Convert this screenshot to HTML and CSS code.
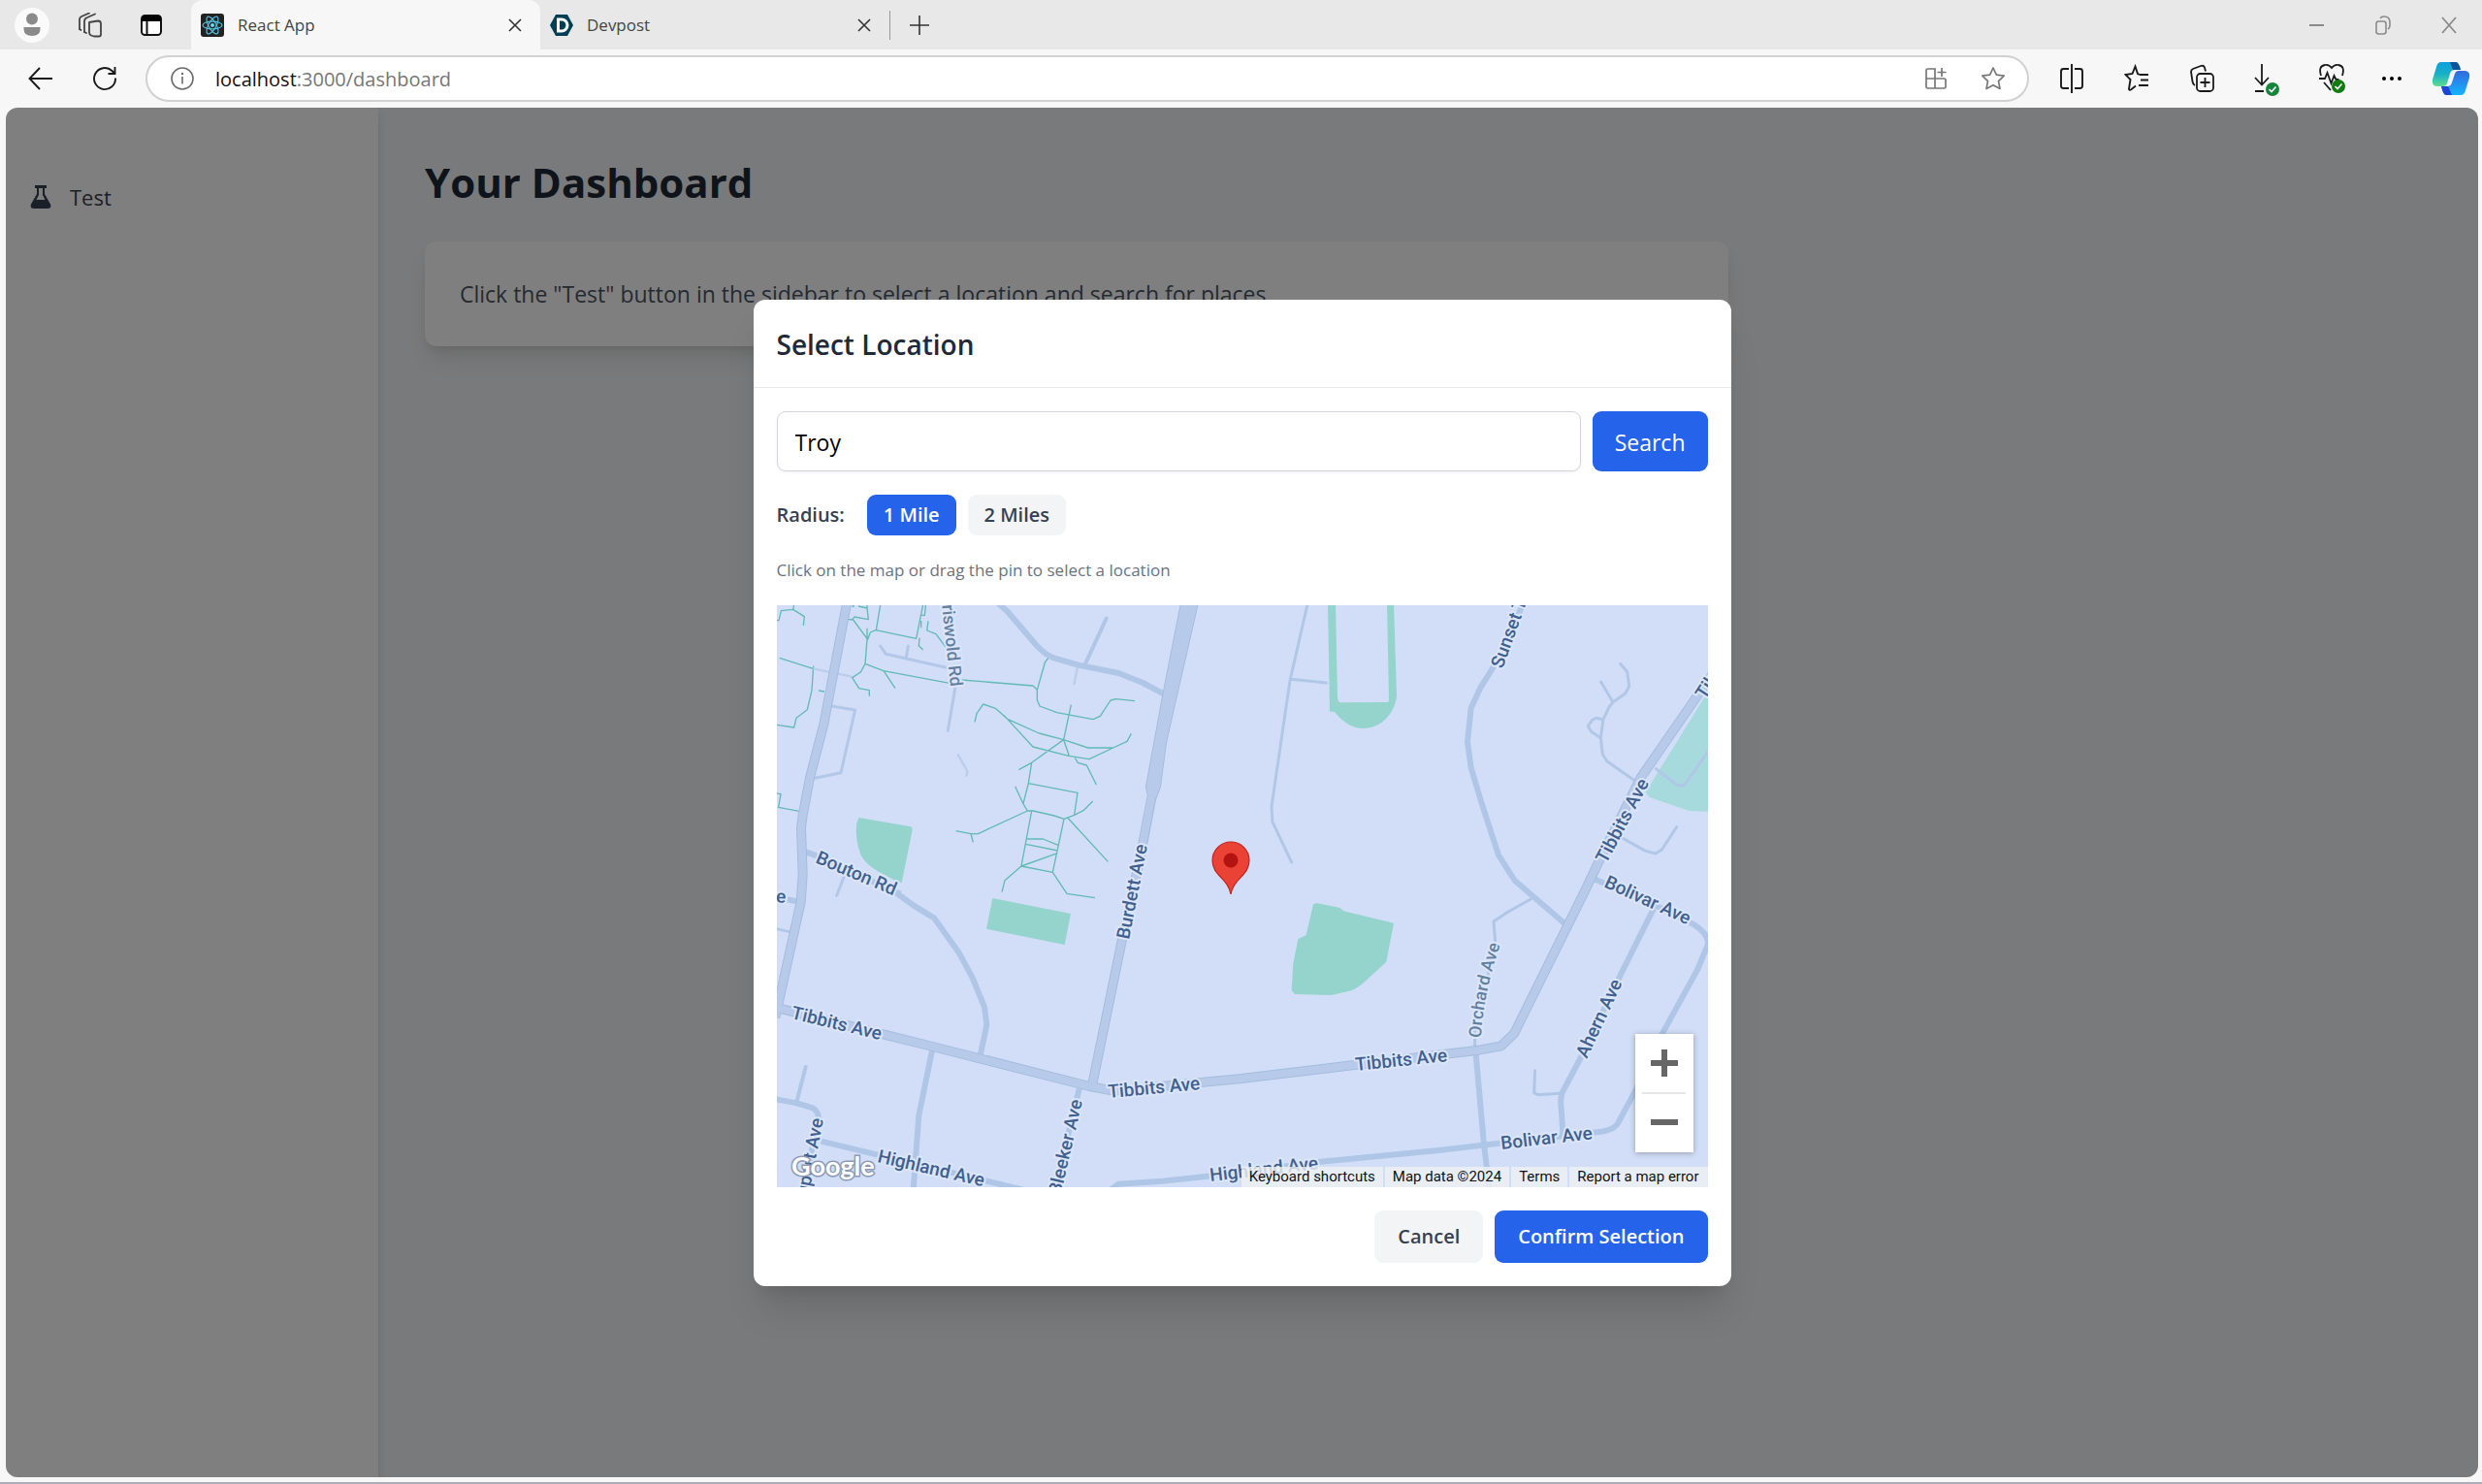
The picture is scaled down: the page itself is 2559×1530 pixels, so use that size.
FILE: index.html
```html
<!DOCTYPE html>
<html lang="en">
<head>
<meta charset="utf-8">
<title>React App</title>
<link rel="stylesheet" href="styles.css">
</head>
<body>
<div class="browser">
  <header class="tabstrip">
    <div class="strip-tools">
      <button class="avatar" aria-label="Profile"><svg width="36" height="36" viewBox="0 0 36 36"><circle cx="18" cy="18" r="18" fill="#fafafa"/><circle cx="18" cy="11.500" r="6" fill="#8a8a8a"/><path d="M9.500 20h17v2q0 7-8.500 7T9.500 22z" fill="#8a8a8a"/></svg></button>
      <button class="strip-btn" aria-label="Workspaces"><svg class="ico" width="26" height="26" viewBox="0 0 26 26"><g fill="none" stroke="#444" stroke-width="1.800" stroke-linejoin="round" stroke-linecap="round"><path d="M12 9.500l9-1.500q3 0 3 3v11q0 2-2 2h-5l-3-1q-2-1-2-3z" transform="translate(0 .5)"/><path d="M7 20V9q0-3 3-4l8-3.500"/><path d="M2 17V7q0-2 2-3l8-3.500"/><path d="M7 20l2 1M2 17l1.500 1"/></g></svg></button>
      <button class="strip-btn" aria-label="Tab actions"><svg width="24" height="24" viewBox="0 0 24 24"><rect x="2" y="2" width="20" height="20" rx="3.500" fill="#fff" stroke="#111" stroke-width="2"/><path d="M2 8V5q0-3 3-3h14q3 0 3 3v3z" fill="#000"/><path d="M7.500 8v14" stroke="#111" stroke-width="2"/></svg></button>
    </div>
    <div class="tab tab-active">
      <svg width="24" height="24" viewBox="0 0 24 24"><rect width="24" height="24" rx="3" fill="#222"/><g fill="none" stroke="#53c1de" stroke-width="1.200"><ellipse cx="12" cy="12" rx="10" ry="3.900"/><ellipse cx="12" cy="12" rx="10" ry="3.900" transform="rotate(60 12 12)"/><ellipse cx="12" cy="12" rx="10" ry="3.900" transform="rotate(120 12 12)"/></g><circle cx="12" cy="12" r="2" fill="#61dafb"/></svg>
      <span class="tab-title">React App</span>
      <button class="tab-close" aria-label="Close tab"><svg width="14" height="14" viewBox="0 0 14 14"><path d="M1 1l12 12M13 1L1 13" stroke="#333" stroke-width="1.600"/></svg></button>
    </div>
    <div class="tab">
      <svg width="24" height="24" viewBox="0 0 24 24"><path d="M6 1h12l6 11-6 11H6L0 12z" fill="#003e54"/><path d="M8.500 6H12a6 6 0 0 1 0 12H8.500z" fill="none" stroke="#fff" stroke-width="3"/></svg>
      <span class="tab-title">Devpost</span>
      <button class="tab-close" aria-label="Close tab"><svg width="14" height="14" viewBox="0 0 14 14"><path d="M1 1l12 12M13 1L1 13" stroke="#333" stroke-width="1.600"/></svg></button>
    </div>
    <span class="tab-divider"></span>
    <button class="new-tab" aria-label="New tab"><svg width="22" height="22" viewBox="0 0 22 22"><path d="M11 1v20M1 11h20" stroke="#333" stroke-width="1.600"/></svg></button>
    <div class="window-controls">
      <button aria-label="Minimize"><svg width="16" height="16" viewBox="0 0 16 16"><path d="M0 8h15" stroke="#8a8a8a" stroke-width="2"/></svg></button>
      <button aria-label="Restore"><svg width="16" height="20" viewBox="0 0 16 20"><g fill="none" stroke="#8a8a8a" stroke-width="1.600"><rect x="1" y="6" width="10" height="13" rx="2.500"/><path d="M5 3q1-2 4-2 6 0 6 6v3q0 3-2 4"/></g></svg></button>
      <button aria-label="Close"><svg width="16" height="18" viewBox="0 0 16 18"><path d="M1 1l14 16M15 1L1 17" stroke="#8a8a8a" stroke-width="1.800"/></svg></button>
    </div>
  </header>

  <div class="toolbar">
    <button class="nav-btn" aria-label="Back"><svg width="26" height="24" viewBox="0 0 26 24"><path d="M12 1L1.500 12 12 23M1.500 12H25" fill="none" stroke="#1a1a1a" stroke-width="1.900"/></svg></button>
    <button class="nav-btn" aria-label="Refresh"><svg width="26" height="26" viewBox="0 0 26 26"><path d="M24 12.500A11 11 0 1 1 20.500 5L23 7.500M23.500 1v7h-7" fill="none" stroke="#1a1a1a" stroke-width="1.900"/></svg></button>
    <div class="address">
      <svg width="24" height="24" viewBox="0 0 24 24"><circle cx="12" cy="12" r="11" fill="none" stroke="#6b6b6b" stroke-width="1.600"/><path d="M12 10v7.500" stroke="#6b6b6b" stroke-width="1.600"/><circle cx="12" cy="7" r="1.200" fill="#6b6b6b"/></svg>
      <a class="url" href="#"><b>localhost</b>:3000/dashboard</a>
      <button aria-label="App available"><svg width="24" height="24" viewBox="0 0 24 24"><g fill="none" stroke="#777" stroke-width="1.700"><path d="M2 3.500Q2 2 3.500 2H11v20H3.500Q2 22 2 20.500zM2 12h18.500q1.500 0 1.500 1.500v7q0 1.500-1.500 1.500H11M18 1v9M13.500 5.500h9"/></g></svg></button>
      <button aria-label="Add to favorites"><svg width="26" height="26" viewBox="0 0 26 26"><path d="M13 2l3.400 7.200 7.800 1-5.700 5.400 1.500 7.900L13 19.700 6 23.500l1.500-7.900L1.800 10.200l7.800-1z" fill="none" stroke="#777" stroke-width="1.700" stroke-linejoin="round"/></svg></button>
    </div>
    <div class="tool-icons">
      <button aria-label="Split screen"><svg width="26" height="30" viewBox="0 0 26 30"><g fill="none" stroke="#1a1a1a" stroke-width="1.900"><path d="M10 5H4.500Q2 5 2 7.500v15Q2 25 4.500 25H10M16 5h5.500Q24 5 24 7.500v15q0 2.500-2.500 2.500H16M13 0v30"/></g></svg></button>
      <button aria-label="Favorites"><svg width="26" height="30" viewBox="0 0 26 30"><path d="M16 11l-2-1-2.500-7.500L8.500 10l-7 1 5 5-1.500 9.500q0 2 2 1l5-4M16 11h9M17 16.500h8M15 22h10" fill="none" stroke="#1a1a1a" stroke-width="1.900"/></svg></button>
      <button aria-label="Collections"><svg width="26" height="30" viewBox="0 0 26 30"><g fill="none" stroke="#1a1a1a" stroke-width="1.800"><path d="M6 22q-2-1-2.500-4L2 8q0-2 2-3l8-3q3-1 4 1.500l1 4"/><rect x="8" y="10" width="17" height="18" rx="3.500"/><path d="M16.500 14v10M11.500 19h10"/></g></svg></button>
      <button aria-label="Downloads"><svg width="26" height="36" viewBox="0 0 26 36"><path d="M8 3v21M1 17l7 7.500 7-7.500M1 31h9" fill="none" stroke="#1a1a1a" stroke-width="1.800"/><circle cx="19" cy="29" r="7" fill="#16833b"/><path d="M15.500 29l2.500 2.500 4.500-5" fill="none" stroke="#fff" stroke-width="1.600"/></svg></button>
      <button aria-label="Browser essentials"><svg width="28" height="32" viewBox="0 0 28 32"><path d="M3 13Q0 3 7 2q4-1 7 3 3-4 7-3 7 1 4 11M1 16h6l2.500-6 4 11 3-8 2 4h3M6 20l7 8" fill="none" stroke="#1a1a1a" stroke-width="1.800"/><circle cx="21" cy="24" r="7" fill="#107c10"/><path d="M17.500 24l2.500 2.500 4.500-5" fill="none" stroke="#fff" stroke-width="1.600"/></svg></button>
      <button class="more" aria-label="Settings and more"><svg width="22" height="6" viewBox="0 0 22 6"><circle cx="3" cy="3" r="2" /><circle cx="11" cy="3" r="2"/><circle cx="19" cy="3" r="2"/></svg></button>
      <button class="copilot" aria-label="Copilot"><svg width="38" height="34" viewBox="0 0 38 34"><defs><linearGradient id="cpA" x1="0" y1="0" x2="0" y2="1"><stop offset="0" stop-color="#0e9fdd"/><stop offset=".5" stop-color="#17b0c8"/><stop offset="1" stop-color="#5fdc8e"/></linearGradient><linearGradient id="cpB" x1="0" y1="0" x2="0" y2="1"><stop offset="0" stop-color="#3468de"/><stop offset="1" stop-color="#14b4fb"/></linearGradient></defs><path d="M9 0h15q3 0 5 8h-6q-4 0-5 4l-3 10q-1 3-4 3H5q-6 0-5-7L4 5q1-5 5-5z" fill="url(#cpA)"/><path d="M18 0h6q3 0 5 8h-8z" fill="#0b559b"/><path d="M29 34H14q-3 0-5-9h6q4 0 5-4l3-9q1-3 4-3h6q6 0 5 7l-4 13q-1 5-5 5z" fill="url(#cpB)"/><path d="M20 34h-6q-3 0-5-9h7z" fill="#1e45d4"/></svg></button>
    </div>
  </div>

  <div class="viewport">
    <aside class="sidebar">
      <button class="side-item"><svg width="22" height="24" viewBox="0 0 22 24"><path d="M5 0h12v3h-2v6l6 10.500q1.500 4.500-3 4.500H4q-4.500 0-3-4.500L7 9V3H5zM9 3v7l-2.500 5h9L13 10V3z" fill="#374151" fill-rule="evenodd"/></svg>Test</button>
    </aside>
    <main class="main">
      <h1>Your Dashboard</h1>
      <section class="card"><p>Click the "Test" button in the sidebar to select a location and search for places.</p></section>
    </main>

    <div class="overlay">
      <div class="modal" role="dialog" aria-labelledby="modal-title">
        <h2 id="modal-title">Select Location</h2>
        <div class="modal-body">
          <form class="search">
            <input type="text" value="Troy" aria-label="Location">
            <button type="button" class="primary">Search</button>
          </form>
          <div class="radius">
            <span class="radius-label">Radius:</span>
            <button class="pill primary">1 Mile</button>
            <button class="pill muted">2 Miles</button>
          </div>
          <p class="hint">Click on the map or drag the pin to select a location</p>
          <div class="map">
            <svg class="map-canvas" viewBox="0 0 960 600" role="img" aria-label="Map">
              <rect width="960" height="600" fill="#d2def7"/>
              <g transform="scale(.333333)">
                <!-- parks and fields -->
                <g fill="#94d4cc">
                  <path transform="translate(1437 -27)" d="M267 20L273 356H287Q330 408 378 408Q430 405 460 362Q480 330 480 305L471 20H450L456 320Q456 327 450 327L303 328Q297 322 297 310L291 20Z"/>
                  <path transform="translate(-18 -27)" d="M272 684L432 712Q438 715 437 722L404 885L398 886L330 850Q290 825 278 800Q258 750 265 700Z"/>
                  <path transform="translate(-18 888)" d="M685 18L927 66 908 162 666 113Z"/>
                  <path transform="translate(1437 888)" d="M222 37Q228 32 236 34L305 48 316 58 471 95 448 215 375 282Q355 298 340 304L278 318 165 315 155 303 160 220 175 145 200 132Z"/>
                  <path transform="translate(1437 -27)" d="M1460 280L1430 315 1250 605 1260 620 1385 663 1460 666Z" fill="#a7dadc"/>
                </g>
                <!-- footpaths -->
                <g transform="translate(-18 -27)" fill="none" stroke="#62b9b6" stroke-width="4" stroke-linejoin="round">
                  <path d="M18 74h6l7-30 37-4 35 22-3 28M68 40l4-20M26 190l106 34M131 215l-5 75-14 60-34 26-7 29-54-8M147 291l18 3M10 608l20 3-7 41 64 12M235 70l19 2 45 61 8-22 17-7 125 26 22-110M325 104l15-90M297 98v35l-6 75-14 26-26 17 21 33 32 6v18M252 70l6-7 43 8-4-35-27-6M297 36V20M250 30l8 0M479 20l-4 38-9 0M464 75v22M486 76l-4 29 28 11 35 47M459 128l-2 24 13 13M291 208l57 22 204 38M348 230l36 54M590 258l220 18 13 13 24-85 12-16M823 289v31l8 19 53 20 112 21 22-10 32-49 17-4 58 6M928 335l-23 108 75 25h78l43-20 13-24M905 443l-76-20-98-44-37-33-38-13-20 29-6 26M720 367l90 98 111 28 63 10 74-35M905 443l17 50M905 443l-99 71-40 22M940 500l9 14 27 8 30 60M806 514l-10 64-16 63M796 578l152 29-10 68M755 587l25 54 13 22-153 71H618l-46-9M618 734l7 26M793 663h18l65 15 30 10 32-12 28-14 29-29M917 684l125 136M806 663l-32 171-51 44-9 36M906 688l-35 165-97-19 112-40M792 750h49l49 20M788 766l99 20M871 853l44 66 87 13"/>
                </g>
                <!-- local streets -->
                <g fill="none" stroke="#afc6e6" stroke-width="18" stroke-linejoin="round">
                  <g transform="translate(-18 -27)">
                    <path d="M690 10L730 45 820 150Q850 182 875 190L950 212 1075 237 1150 267 1220 304M108 790L135 800 400 920"/>
                    <path d="M972 208L1037 68" stroke-width="12" stroke-linecap="round"/>
                    <path d="M338 153L355 178 555 223M424 153L418 190M570 280L547 415M183 338L260 351 216 545 135 562M228 860L203 925" stroke-width="9" stroke-linecap="round" stroke="#b3c8e8"/>
                    <path d="M948 218L937 272M577 487L607 540 604 557M130 223L250 248" stroke-width="7" stroke="#bccdeb"/>
                  </g>
                  <g transform="translate(-18 888)">
                    <path d="M385 0L440 40 505 80 580 185 622 262 660 355 667 410 648 500M498 490L457 690 440 920M0 637L80 652 130 667Q147 680 147 700L97 930M155 770L330 812 780 920M953 608L875 930M50 22L90 30"/>
                    <path d="M107 540L80 645" stroke-width="12" stroke-linecap="round"/>
                    <path d="M10 111L60 123" stroke-width="8"/>
                    <path d="M1050 920L1075 902 1210 893 1350 878 1700 833 2065 798 2245 777 2555 742Q2600 738 2617 718L2670 620 2755 440 2865 240 2898 160Q2900 130 2855 100L2745 45 2550 -40"/>
                  </g>
                  <g transform="translate(1437 -27)">
                    <path d="M875 10L840 100 775 225 740 280 710 345 699 450 710 530 740 630 795 800 845 878 905 930 1000 1012"/>
                    <path d="M205 20L150 260 93 650 96 697 155 822M155 256L262 267M1172 208L1193 233 1199 278 1187 300 1149 327 1137 342 1119 380 1111 437 1117 488 1131 510 1220 572M1112 264L1149 327M1119 380L1097 376 1085 382 1072 401 1082 418 1111 437M1180 748L1250 787 1281 795 1300 783 1346 713M1282 533L1347 583 1368 586 1450 470" stroke-width="9" stroke-linecap="round" stroke="#b1c7e7"/>
                  </g>
                  <g transform="translate(1437 888)">
                    <path d="M725 500L750 780 767 920M1275 50L1175 250 1050 510 992 620Q986 640 988 655L995 755"/>
                    <path d="M722 490L722 430 785 155 780 90 825 60 900 18M908 548L905 620 917 626 985 622" stroke-width="9"/>
                  </g>
                </g>
                <!-- arterial roads: casing first, fill on top -->
                <g fill="none" stroke="#a4bddd" stroke-width="30" stroke-linejoin="round">
                  <path d="M219 -20L145 368 102 533 80 650 75 688 80 833 74 918 -5 1275"/>
                  <path d="M-20 1240L332 1328 482 1365 967 1488 1040 1502 1437 1464 2087 1386 2159 1378 2240 1363 2280 1325 2497 888 2547 783 2672 533 2852 273 2910 190"/>
                  <path d="M1160 590L1127 763 1067 1038 975 1485"/>
                </g>
                <path d="M1250 -10H1304L1205 423 1186 563 1172 600H1150L1141 563 1194 273Z" fill="#b7caea" stroke="#a4bddd" stroke-width="3"/>
                <g fill="none" stroke="#b7caea" stroke-width="24" stroke-linejoin="round">
                  <path d="M219 -20L145 368 102 533 80 650 75 688 80 833 74 918 -5 1275"/>
                  <path d="M-20 1240L332 1328 482 1365 967 1488 1040 1502 1437 1464 2087 1386 2159 1378 2240 1363 2280 1325 2497 888 2547 783 2672 533 2852 273 2910 190"/>
                  <path d="M1160 584L1127 763 1067 1038 975 1485"/>
                </g>
              </g>
              <defs><path id="orchard" d="M726 446Q728 400 748 344"/></defs>
              <g class="road-names">
                <text transform="translate(14 426) rotate(13.500)">Tibbits Ave</text>
                <text transform="translate(342 508) rotate(-5.400)">Tibbits Ave</text>
                <text transform="translate(597 480) rotate(-6)">Tibbits Ave</text>
                <text transform="translate(39 265) rotate(23)">Bouton Rd</text>
                <text transform="translate(363 345) rotate(-79)">Burdett Ave</text>
                <text transform="translate(748 66) rotate(-70)">Sunset T</text>
                <text transform="translate(855 267) rotate(-62)">Tibbits Ave</text>
                <text transform="translate(957 98) rotate(-57)">Tib</text>
                <text transform="translate(852 290) rotate(24.500)">Bolivar Ave</text>
                <text transform="translate(835 468) rotate(-65)">Ahern Ave</text>
                <text transform="translate(747 561) rotate(-6.500)">Bolivar Ave</text>
                <text transform="translate(103 574) rotate(13)">Highland Ave</text>
                <text transform="translate(447 594) rotate(-6.500)">Highland Ave</text>
                <text text-anchor="end" transform="translate(315 511) rotate(-77)">Bleeker Ave</text>
                <text text-anchor="end" transform="translate(48 530) rotate(-79)">Rupert Ave</text>
                <text text-anchor="end" transform="translate(9 307) rotate(4)">e</text>
                <text class="minor" text-anchor="end" transform="translate(179 84) rotate(84)">Griswold Rd</text>
                <text class="minor"><textPath href="#orchard">Orchard Ave</textPath></text>
              </g>
              <text class="brand" x="15" y="588">Google</text>
              <path d="M468 298C465 281 449 279 449 263A19 19 0 0 1 487 263C487 279 471 281 468 298Z" fill="#ea4335" stroke="#c5221f" stroke-width="1.200"/>
              <circle cx="468" cy="263" r="7.500" fill="#b31412"/>
            </svg>
            <div class="zoom">
              <button aria-label="Zoom in"><svg width="28" height="28" viewBox="0 0 28 28"><path d="M14 0v28M0 14h28" stroke="#666" stroke-width="6"/></svg></button>
              <button aria-label="Zoom out"><svg width="28" height="28" viewBox="0 0 28 28"><path d="M0 14h28" stroke="#666" stroke-width="6"/></svg></button>
            </div>
            <div class="credits">
              <button>Keyboard shortcuts</button><span>Map data ©2024</span><a href="#">Terms</a><a href="#">Report a map error</a>
            </div>
          </div>
          <div class="actions">
            <button class="action muted">Cancel</button>
            <button class="action primary">Confirm Selection</button>
          </div>
        </div>
      </div>
    </div>
  </div>
</div>
</body>
</html>
```
FILE: styles.css
```css
* { box-sizing: border-box; margin: 0; padding: 0; }
body { font-family: "Open Sans", "Noto Sans", sans-serif; background: #f7f7f7; color: #1f2937; }
button { font: inherit; color: inherit; border: 0; background: none; }
a { color: inherit; text-decoration: none; }
svg { display: block; flex: none; }

.browser { display: flex; flex-direction: column; min-height: 100vh; padding-bottom: 5px; border-bottom: 2px solid #adadb8; }

.tabstrip { display: flex; align-items: center; height: 51px; background: #e8e8e8; font-size: 17px; color: #444; }
.strip-tools { display: flex; align-items: center; width: 197px; padding-left: 15px; }
.avatar { width: 36px; height: 36px; margin-right: 10px; }
.strip-btn { width: 63px; display: flex; justify-content: center; }
.tab { display: flex; align-items: center; width: 360px; height: 51px; padding: 0 19px 0 10px; }
.tab-active { background: #f7f7f7; border-radius: 12px 12px 0 0; }
.tab-title { flex: 1; padding-left: 14px; }
.tab-divider { width: 1px; height: 30px; background: #999; }
.new-tab { padding: 0 19px; }
.window-controls { display: flex; margin-left: auto; }
.window-controls button { display: flex; align-items: center; justify-content: center; width: 68px; height: 51px; }

.toolbar { display: flex; align-items: center; height: 60px; padding-left: 9px; background: #f7f7f7; }
.nav-btn { display: flex; justify-content: center; width: 66px; }
.address { display: flex; align-items: center; flex: 1; height: 48px; margin-left: 9px; padding: 0 22px 0 24px; border: 2px solid #d1d1d1; border-radius: 24px; background: #fff; gap: 34px; }
.url { flex: 1; font-size: 20px; color: #767676; margin-left: -12px; }
.url b { font-weight: 400; color: #111; }
.tool-icons { display: flex; align-items: center; padding-left: 10px; }
.tool-icons button { display: flex; align-items: center; justify-content: center; width: 67px; height: 48px; }
.tool-icons .more { width: 58px; }
.tool-icons .copilot { width: 64px; }

.viewport { position: relative; flex: 1; display: flex; margin: 0 4px 0 6px; border-radius: 12px; background: #f3f4f6; overflow: hidden; }
.sidebar { width: 384px; padding: 60px 12px; background: #fff; box-shadow: 0 6px 9px rgba(0, 0, 0, .1); }
.side-item { display: flex; align-items: center; gap: 19px; padding: 14px 13px; font-size: 22px; line-height: 36px; color: #374151; }
.main { flex: 1; padding: 50px 48px; }
.main h1 { font-size: 42px; line-height: 54px; font-weight: 700; }
.card { max-width: 1344px; margin-top: 34px; padding: 36px; border-radius: 12px; background: #fff; box-shadow: 0 15px 22px -4px rgba(0, 0, 0, .1), 0 6px 9px -3px rgba(0, 0, 0, .08); }
.card p { font-size: 23px; line-height: 36px; color: #4b5563; }

.overlay { position: absolute; inset: 0; display: flex; align-items: center; justify-content: center; background: rgba(0, 0, 0, .5); }
.modal { width: 1008px; border-radius: 12px; background: #fff; box-shadow: 0 30px 38px -8px rgba(0, 0, 0, .12), 0 12px 15px -9px rgba(0, 0, 0, .1); }
.modal h2 { padding: 25px 24px 23px; border-bottom: 1px solid #e5e7eb; font-size: 28px; line-height: 42px; font-weight: 600; }
.modal-body { padding: 24px; }
.primary { background: #2563eb; color: #fff; }
.muted { background: #f3f4f6; color: #374151; }

.search { display: flex; gap: 12px; }
.search input { flex: 1; min-width: 0; height: 62px; padding: 2px 18px 0; border: 1px solid #d1d5db; border-radius: 9px; font: inherit; font-size: 23px; color: #000; box-shadow: 0 1px 3px rgba(0, 0, 0, .06); }
.search button { padding: 2px 23px 0; border-radius: 9px; font-size: 23px; }

.radius { display: flex; align-items: center; gap: 12px; margin-top: 24px; font-size: 20px; font-weight: 600; color: #374151; }
.radius-label { margin-right: 11px; }
.pill { height: 42px; padding: 0 17px; border-radius: 9px; }
.radius .primary { color: #fff; }
.hint { margin-top: 24px; font-size: 17px; line-height: 24px; color: #6b7280; }

.map { position: relative; margin-top: 24px; }
.map-canvas { width: 100%; height: auto; font-family: Roboto, sans-serif; }
.road-names text { font-size: 19px; font-weight: 500; fill: #41608d; stroke: #dbe6fb; stroke-width: 4px; paint-order: stroke; stroke-linejoin: round; }
.road-names .minor { font-size: 18px; fill: #64809f; }
.brand { font-family: Lato, sans-serif; font-size: 27px; font-weight: 700; fill: #fff; stroke: #8d9ab3; stroke-width: 3px; paint-order: stroke; }
.zoom { position: absolute; right: 15px; bottom: 36px; width: 60px; background: #fff; box-shadow: 0 1px 6px rgba(0, 0, 0, .3); }
.zoom button { display: flex; align-items: center; justify-content: center; width: 60px; height: 61px; }
.zoom button + button::before { content: ""; position: absolute; top: 60px; left: 7px; right: 8px; height: 2px; background: #e6e6e6; }
.credits { position: absolute; right: 0; bottom: 0; display: flex; gap: 2px; font: 15px/21px Roboto, sans-serif; color: #111; }
.credits > * { padding: 0 8px; background: rgba(239, 241, 244, .8); }
.credits > :last-child { padding-right: 9px; }

.actions { display: flex; justify-content: flex-end; gap: 12px; margin-top: 24px; }
.action { height: 54px; padding: 0 24px; border-radius: 9px; font-size: 20px; font-weight: 600; }
```
